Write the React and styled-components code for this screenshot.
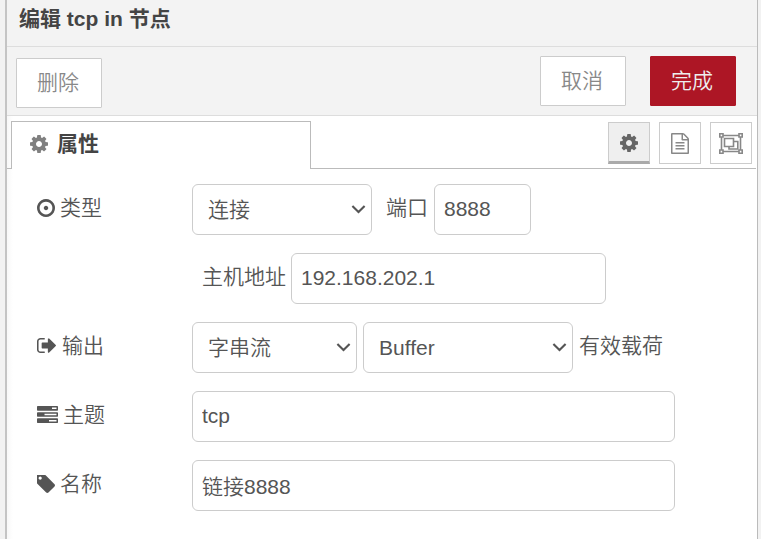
import React from "react";
import styled, { createGlobalStyle } from "styled-components";

const GlobalStyle = createGlobalStyle`
  *, *::before, *::after { box-sizing: border-box; }
  body { margin: 0; background: #f3f3f3; overflow: hidden; }
  body, input, select, button {
    font-family: "Liberation Sans", "Noto Sans CJK SC", sans-serif;
    font-size: 21px;
    font-weight: 350;
    color: #555;
  }
`;

const Workspace = styled.div`
  display: flex;
  width: 761px;
  height: 539px;
  padding-left: 5px;
  padding-right: 3px;
  background: #f2f2f2;
`;

const Tray = styled.section`
  flex: 1;
  display: flex;
  flex-direction: column;
  min-width: 0;
  background: linear-gradient(90deg, #f8f8f8, #fff 6px);
  border-left: 2px solid #c4c4c4;
  border-right: 1px solid #bbb;
`;

const Header = styled.header`
  height: 47px;
  flex: none;
  padding-left: 12px;
  line-height: 38px;
  font-weight: 700;
  font-size: 21px;
  color: #444;
  background: #f3f3f3;
  border-bottom: 1px solid #ddd;
  white-space: pre;
`;

const Toolbar = styled.div`
  display: flex;
  align-items: flex-start;
  gap: 24px;
  height: 69px;
  flex: none;
  padding: 9px 21px 0 9px;
  background: #f3f3f3;
  border-bottom: 1px solid #ddd;
`;

const Button = styled.button`
  width: 86px;
  height: 50px;
  padding: 0 2px 0 0;
  line-height: 46px;
  border-radius: 1px;
  border: 1px solid ${(p) => (p.$primary ? "#ad1625" : "#ccc")};
  background: ${(p) => (p.$primary ? "#ad1625" : "#fff")};
  color: ${(p) => (p.$primary ? "#eee" : "#888")};
`;

const DeleteButton = styled(Button)`
  margin-top: 2px;
  margin-right: auto;
`;

const TabBar = styled.nav`
  display: flex;
  gap: 9px;
  height: 53px;
  flex: none;
  margin-right: 1px;
  padding: 5px 4px 0 4px;
  border-bottom: 1px solid #bbb;
`;

const Tab = styled.div`
  display: flex;
  align-items: center;
  gap: 9px;
  width: 300px;
  height: 48px;
  padding: 0 0 4px 18px;
  border: 1px solid #bbb;
  border-bottom: none;
  background: #fff;
  font-weight: 700;
  line-height: 44px;
  color: #444;
  svg { color: #808080; }
`;

const TabTitle = styled.span`
  height: 44px;
`;

const IconButton = styled.button`
  display: flex;
  align-items: center;
  justify-content: center;
  width: 42px;
  height: 42px;
  margin-top: 1px;
  padding: 0;
  border: 1px solid #ccc;
  border-bottom: ${(p) => (p.$active ? "3px solid #aaa" : "1px solid #ccc")};
  padding-top: ${(p) => (p.$active ? "1px" : "0")};
  background: ${(p) => (p.$active ? "#efefef" : "#fff")};
  color: ${(p) => (p.$active ? "#666" : "#888")};
`;

const ActiveTabShell = styled.div`
  display: flex;
  margin-right: auto;
  height: 48px;
  background: #fff;
`;

const Form = styled.form`
  display: flex;
  flex-direction: column;
  gap: 18px;
  padding: 15px 0 0 30px;
`;

const Row = styled.div`
  display: flex;
  height: 51px;
`;

const Label = styled.label`
  display: flex;
  align-items: center;
  gap: ${(p) => p.$gap || 5}px;
  width: 155px;
  height: 47px;
`;

const LabelText = styled.span`
  height: 47px;
  line-height: 48px;
`;

const Caption = styled.span`
  height: 48px;
  line-height: 48px;
  margin: 0 ${(p) => p.$right || 0}px 0 ${(p) => p.$left || 0}px;
  white-space: nowrap;
`;

const Input = styled.input`
  width: ${(p) => p.$width}px;
  height: 51px;
  padding: 0 9px 2px;
  border: 1px solid #ccc;
  border-radius: 6px;
  background: #fff;
  outline: none;
`;

const SelectBox = styled.div`
  position: relative;
  width: ${(p) => p.$width}px;
  height: 51px;
  margin-right: ${(p) => p.$right || 0}px;
  svg { position: absolute; right: 6.5px; top: 20px; pointer-events: none; }
`;

const NativeSelect = styled.select`
  appearance: none;
  width: 100%;
  height: 51px;
  padding: 0 15px 1px;
  border: 1px solid #ccc;
  border-radius: 6px;
  background: #fff;
  outline: none;
`;

const Drawing = styled.svg`
  display: block;
  flex: none;
  fill: currentColor;
`;

const icons = {
  cog: {
    box: "128 128 1536 1536", w: 18, h: 18,
    d: "M1152 896q0-106-75-181t-181-75-181 75-75 181 75 181 181 75 181-75 75-181zm512-109v222q0 12-8 23t-20 13l-185 28q-19 54-39 91 35 50 107 138 10 12 10 25t-9 23q-27 37-99 108t-94 71q-12 0-26-9l-138-108q-44 23-91 38-16 136-29 186-7 28-36 28h-222q-14 0-24.5-8.5t-11.5-21.5l-28-184q-49-16-90-37l-141 107q-10 9-25 9-14 0-25-11-126-114-165-168-7-10-7-23 0-12 8-23 15-21 51-66.5t54-70.5q-27-50-41-99l-183-27q-13-2-21-12.5t-8-23.5v-222q0-12 8-23t19-13l186-28q14-46 39-92-40-57-107-138-10-12-10-24 0-10 9-23 26-36 98.5-107.5t94.5-71.5q13 0 26 10l138 107q44-23 91-38 16-136 29-186 7-28 36-28h222q14 0 24.5 8.5t11.5 21.5l28 184q49 16 90 37l142-107q9-9 24-9 13 0 25 10 129 119 165 170 7 8 7 22 0 12-8 23-15 21-51 66.5t-54 70.5q26 50 41 98l183 28q13 2 21 12.5t8 23.5z",
  },
  dot: {
    box: "128 128 1536 1536", w: 18, h: 18,
    d: "M1088 896q0 80-56 136t-136 56-136-56-56-136 56-136 136-56 136 56 56 136zm-192-544q-148 0-273 73t-198 198-73 273 73 273 198 198 273 73 273-73 198-198 73-273-73-273-198-198-273-73zm768 544q0 209-103 385.5t-279.5 279.5-385.5 103-385.5-103-279.5-279.5-103-385.5 103-385.5 279.5-279.5 385.5-103 385.5 103 279.5 279.5 103 385.5z",
  },
  signOut: {
    box: "64 256 1568 1280", w: 19, h: 15,
    d: "M704 1440q0 4 1 20t.5 26.5-3 23.5-10 19.5-20.5 6.5h-320q-119 0-203.5-84.5t-84.5-203.5v-704q0-119 84.5-203.5t203.5-84.5h320q13 0 22.5 9.5t9.5 22.5q0 4 1 20t.5 26.5-3 23.5-10 19.5-20.5 6.5h-320q-66 0-113 47t-47 113v704q0 66 47 113t113 47h312l11.5 1 11.5 3 8 5.5 7 9 2 13.5zm928-544q0 26-19 45l-544 544q-19 19-45 19t-45-19-19-45v-288h-448q-26 0-45-19t-19-45v-384q0-26 19-45t45-19h448v-288q0-26 19-45t45-19 45 19l544 544q19 19 19 45z",
  },
  tasks: {
    box: "0 128 1792 1408", w: 21, h: 17,
    d: "M1024 1408h640v-128h-640v128zm-384-512h1024v-128h-1024v128zm640-512h384v-128h-384v128zm512 832v256q0 26-19 45t-45 19h-1664q-26 0-45-19t-19-45v-256q0-26 19-45t45-19h1664q26 0 45 19t19 45zm0-512v256q0 26-19 45t-45 19h-1664q-26 0-45-19t-19-45v-256q0-26 19-45t45-19h1664q26 0 45 19t19 45zm0-512v256q0 26-19 45t-45 19h-1664q-26 0-45-19t-19-45v-256q0-26 19-45t45-19h1664q26 0 45 19t19 45z",
  },
  tag: {
    box: "192 192 1451 1451", w: 18, h: 18,
    d: "M576 448q0-53-37.5-90.5t-90.5-37.5-90.5 37.5-37.5 90.5 37.5 90.5 90.5 37.5 90.5-37.5 37.5-90.5zm1067 576q0 53-37 90l-491 492q-39 37-91 37-53 0-90-37l-715-716q-38-37-64.5-101t-26.5-117v-416q0-52 38-90t90-38h416q53 0 117 26.5t102 64.5l715 714q37 39 37 91z",
  },
  file: {
    box: "128 0 1536 1792", w: 18, h: 21,
    d: "M1596 380q28 28 48 76t20 88v1152q0 40-28 68t-68 28h-1344q-40 0-68-28t-28-68v-1600q0-40 28-68t68-28h896q40 0 88 20t76 48zm-444-244v376h376q-10-29-22-41l-313-313q-12-12-41-22zm384 1528v-1024h-416q-40 0-68-28t-28-68v-416h-768v1536h1280zm-1024-864q0-14 9-23t23-9h704q14 0 23 9t9 23v64q0 14-9 23t-23 9h-704q-14 0-23-9t-9-23v-64zm736 224q14 0 23 9t9 23v64q0 14-9 23t-23 9h-704q-14 0-23-9t-9-23v-64q0-14 9-23t23-9h704zm0 256q14 0 23 9t9 23v64q0 14-9 23t-23 9h-704q-14 0-23-9t-9-23v-64q0-14 9-23t23-9h704z",
  },
};

function Icon({ name }) {
  const { box, w, h, d } = icons[name];
  return (
    <Drawing viewBox={box} width={w} height={h} preserveAspectRatio="none" aria-hidden="true">
      <path d={d} />
    </Drawing>
  );
}

function GroupIcon() {
  return (
    <Drawing width="24" height="21" viewBox="0 0 24 21" aria-hidden="true">
      <g fill="none" stroke="currentColor" strokeWidth="1.6">
        <path d="M4 2.5H20M4 18.5H20M2.5 4V17M21.5 4V17" />
        <path d="M5.5 5.5H14.5V13.5H5.5ZM14.5 8.5H18.8V16H10V13.5" />
        <path d="M.8 .8H4V4H.8ZM20 .8H23.2V4H20ZM.8 17H4V20.2H.8ZM20 17H23.2V20.2H20Z" />
      </g>
    </Drawing>
  );
}

function Select({ width, right, value }) {
  return (
    <SelectBox $width={width} $right={right}>
      <NativeSelect defaultValue={value}>
        <option>{value}</option>
      </NativeSelect>
      <Drawing width="15" height="11" viewBox="0 0 15 11">
        <path d="M1.4 2 7.5 8.1 13.6 2" fill="none" stroke="#555" strokeWidth="2.1" />
      </Drawing>
    </SelectBox>
  );
}

export default function App() {
  return (
    <>
      <GlobalStyle />
      <Workspace>
        <Tray>
          <Header>编辑 tcp in 节点</Header>
          <Toolbar>
            <DeleteButton>删除</DeleteButton>
            <Button>取消</Button>
            <Button $primary>完成</Button>
          </Toolbar>
          <TabBar>
            <ActiveTabShell>
              <Tab><Icon name="cog" /><TabTitle>属性</TabTitle></Tab>
            </ActiveTabShell>
            <IconButton $active aria-label="属性"><Icon name="cog" /></IconButton>
            <IconButton aria-label="描述"><Icon name="file" /></IconButton>
            <IconButton aria-label="外观"><GroupIcon /></IconButton>
          </TabBar>
          <Form>
            <Row>
              <Label><Icon name="dot" /><LabelText>类型</LabelText></Label>
              <Select width={180} value="连接" />
              <Caption $left={14} $right={6}>端口</Caption>
              <Input $width={97} defaultValue="8888" />
            </Row>
            <Row>
              <Caption $left={165} $right={5}>主机地址</Caption>
              <Input $width={315} defaultValue="192.168.202.1" />
            </Row>
            <Row>
              <Label $gap={6}><Icon name="signOut" /><LabelText>输出</LabelText></Label>
              <Select width={165} right={6} value="字串流" />
              <Select width={210} value="Buffer" />
              <Caption $left={6}>有效载荷</Caption>
            </Row>
            <Row>
              <Label><Icon name="tasks" /><LabelText>主题</LabelText></Label>
              <Input $width={483} defaultValue="tcp" />
            </Row>
            <Row>
              <Label><Icon name="tag" /><LabelText>名称</LabelText></Label>
              <Input $width={483} defaultValue="链接8888" />
            </Row>
          </Form>
        </Tray>
      </Workspace>
    </>
  );
}
